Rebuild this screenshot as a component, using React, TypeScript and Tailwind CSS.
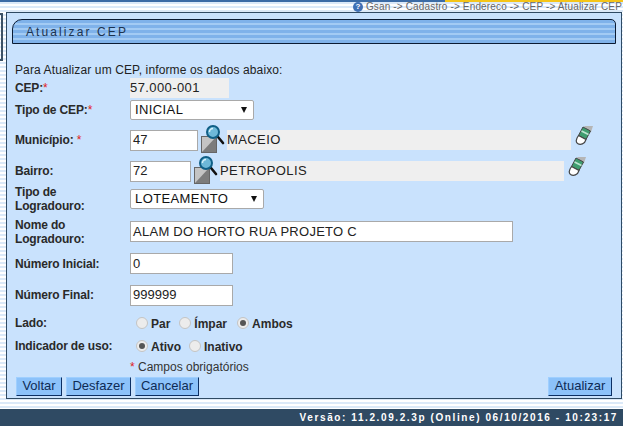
const SearchIcon = () => (
  <svg width="24" height="30" viewBox="0 0 24 30" className="-mt-[3px] ml-[3px] mr-[2px] shrink-0">
    <rect x="0.5" y="12.5" width="15" height="16" fill="#c4c4c4" stroke="#666" strokeWidth="1" />
    <path d="M1 28 L15 13 V28 Z" fill="#7c7c7c" />
    <line x1="17" y1="13" x2="22" y2="19" stroke="#111" strokeWidth="2.6" strokeLinecap="round" />
    <circle cx="12" cy="8" r="6" fill="#6db8d8" stroke="#0f5f86" strokeWidth="2" />
    <path d="M8.5 8 a3.5 3.5 0 0 1 3.5 -3.5" fill="none" stroke="#d8f2fb" strokeWidth="1.4" />
  </svg>
);

const EraserIcon = () => (
  <svg width="19" height="21" viewBox="0 0 19 21" className="-mt-[10px] ml-[4px] shrink-0">
    <path d="M9 1 L18 1 L16 7 L14 8 Z" fill="#b5b5b5" />
    <path d="M8 2 L15.5 6 L11 14.5 L3.5 10.5 Z" fill="#3f9d70" stroke="#444" strokeWidth="1" />
    <path d="M6.5 6 L13.5 9.5" stroke="#bde5d0" strokeWidth="1.6" />
    <path d="M3.5 10.5 L11 14.5 L9.5 17.5 Q6 20.5 2.5 18.5 Q-0.5 16 3.5 10.5 Z" fill="#fff" stroke="#444" strokeWidth="1.2" />
  </svg>
);

const HelpIcon = () => (
  <span className="flex h-[10px] w-[10px] items-center justify-center rounded-full bg-[#3f70b5] text-[8px] font-bold leading-none text-white">
    ?
  </span>
);

const Radio = ({ checked = false }: { checked?: boolean }) => (
  <span className="flex h-[12px] w-[12px] shrink-0 items-center justify-center rounded-full border border-[#c4c4c4] bg-[#ececec]">
    {checked && <span className="h-[6px] w-[6px] rounded-full bg-[#555]" />}
  </span>
);

const Star = () => <span className="font-normal text-[#e02020]">*</span>;

const Row = ({ label, h, children }: { label: React.ReactNode; h: string; children?: React.ReactNode }) => (
  <div className={`flex items-center ${h}`}>
    <div className="w-[115px] shrink-0 font-bold leading-[14px] tracking-[-0.15px] text-[#2a2a2a]">{label}</div>
    <div className="flex min-w-0 flex-1 items-center">{children}</div>
  </div>
);

const TextBox = ({ w, value, wide = false }: { w: string; value: string; wide?: boolean }) => (
  <div className={`flex h-[21px] ${w} shrink-0 items-center border border-[#a9a9a9] bg-white pl-[2px] text-[13px] text-[#222] ${wide ? "tracking-[0.27px]" : ""}`}>
    {value}
  </div>
);

const Select = ({ w, value }: { w: string; value: string }) => (
  <div className={`flex h-[20px] ${w} items-center justify-between rounded-[2px] border border-[#a9a9a9] bg-white pl-[4px] pr-[6px] text-[13px] tracking-[0.4px] text-[#111]`}>
    {value}
    <span className="h-0 w-0 border-x-[3.5px] border-t-[6px] border-x-transparent border-t-[#111]" />
  </div>
);

const ReadOnly = ({ w, value }: { w: string; value: string }) => (
  <div className={`flex h-[20px] ${w} items-center bg-[#efefef] text-[13px] tracking-[0.4px] text-[#222]`}>{value}</div>
);

const Btn = ({ w, children }: { w: string; children: React.ReactNode }) => (
  <div className={`flex h-[19px] ${w} items-center justify-center border border-[#9fcfff] border-b-[#0c2f63] border-r-[#0c2f63] bg-[#8cc2fa] text-[13px] text-[#0e2b55]`}>
    {children}
  </div>
);

export default function App() {
  return (
    <div className="flex h-[426px] w-[623px] flex-col overflow-hidden bg-[repeating-linear-gradient(180deg,#ffffff_0px,#ffffff_2px,#dbe9f8_2px,#dbe9f8_4px)] font-['Liberation_Sans',sans-serif] text-[12px]">
      <div className="flex h-[2px] shrink-0">
        <div className="w-[445px] bg-[#3b6ba5]" />
        <div className="flex-1 bg-[#f5c518]" />
      </div>
      <div className="flex h-[10px] shrink-0 items-center justify-end gap-[3px] pr-[1px] text-[10px] leading-none tracking-[0.15px] text-[#666]">
        <HelpIcon />
        <span>{"Gsan -> Cadastro -> Endereco -> CEP -> Atualizar CEP"}</span>
      </div>
      <div className="flex min-h-0 flex-1 pb-[10px]">
        <div className="mr-[3px] mt-[1px] h-[48px] w-[3px] shrink-0 border-y-2 border-r-2 border-[#3d5266]" />
        <div className="mr-[1px] flex flex-1 flex-col border border-[#2f4a63] bg-[#c9e2fd] pl-[8px] pr-[5px] pt-[6px]">
          <div className="mb-[18px] -ml-[3px] flex h-[25px] shrink-0 items-center rounded-tl-[10px] rounded-tr-[5px] border border-[#0b1b33] bg-[repeating-linear-gradient(180deg,#7fb2ea_0px,#7fb2ea_3px,#a3cbf4_3px,#a3cbf4_5px)] pl-[13px] text-[12px] tracking-[2.1px] text-[#1b3350]">
            Atualizar CEP
          </div>
          <div className="flex h-[15px] items-center text-[12px] tracking-[0.12px] text-[#222]">
            Para Atualizar um CEP, informe os dados abaixo:
          </div>
          <Row h="h-[22px]" label={<>CEP:<Star /></>}>
            <ReadOnly w="w-[99px]" value="57.000-001" />
          </Row>
          <Row h="h-[22px]" label={<>Tipo de CEP:<Star /></>}>
            <Select w="w-[124px]" value="INICIAL" />
          </Row>
          <Row h="h-[38px]" label={<>Município: <Star /></>}>
            <TextBox w="w-[68px]" value="47" />
            <SearchIcon />
            <ReadOnly w="w-[344px]" value="MACEIO" />
            <EraserIcon />
          </Row>
          <Row h="h-[24px]" label="Bairro:">
            <TextBox w="w-[61px]" value="72" />
            <SearchIcon />
            <ReadOnly w="w-[344px]" value="PETROPOLIS" />
            <EraserIcon />
          </Row>
          <Row h="h-[32px]" label={<>Tipo de<br />Logradouro:</>}>
            <Select w="w-[134px]" value="LOTEAMENTO" />
          </Row>
          <Row h="h-[33px]" label={<>Nome do<br />Logradouro:</>}>
            <TextBox w="w-[383px]" value="ALAM DO HORTO RUA PROJETO C" wide />
          </Row>
          <Row h="h-[31px]" label="Número Inicial:">
            <TextBox w="w-[103px]" value="0" />
          </Row>
          <Row h="h-[32px]" label="Número Final:">
            <TextBox w="w-[103px]" value="999999" />
          </Row>
          <Row h="h-[23px]" label="Lado:">
            <div className="ml-[6px] flex items-center gap-[3px] font-bold text-[#2a2a2a]">
              <Radio /><span className="mr-[6px] mt-[2px]">Par</span>
              <Radio /><span className="mr-[7px] mt-[2px]">Ímpar</span>
              <Radio checked /><span className="mt-[2px]">Ambos</span>
            </div>
          </Row>
          <Row h="h-[23px]" label="Indicador de uso:">
            <div className="ml-[6px] flex items-center gap-[3px] font-bold text-[#2a2a2a]">
              <Radio checked /><span className="mr-[5px] mt-[2px]">Ativo</span>
              <Radio /><span className="mt-[2px]">Inativo</span>
            </div>
          </Row>
          <div className="flex h-[19px] items-center pl-[115px] text-[#333]">
            <Star />&nbsp;Campos obrigatórios
          </div>
          <div className="ml-[1px] flex h-[20px] items-center gap-[4px]">
            <Btn w="w-[46px]">Voltar</Btn>
            <Btn w="w-[65px]">Desfazer</Btn>
            <Btn w="w-[64px]">Cancelar</Btn>
            <div className="ml-auto mr-[4px]"><Btn w="w-[64px]">Atualizar</Btn></div>
          </div>
        </div>
      </div>
      <div className="flex h-[17px] shrink-0 items-center justify-end bg-[#2f4a63] pr-[5px] text-[10px] font-bold tracking-[1.6px] text-white">
        Versão: 11.2.09.2.3p (Online) 06/10/2016 - 10:23:17
      </div>
    </div>
  );
}
